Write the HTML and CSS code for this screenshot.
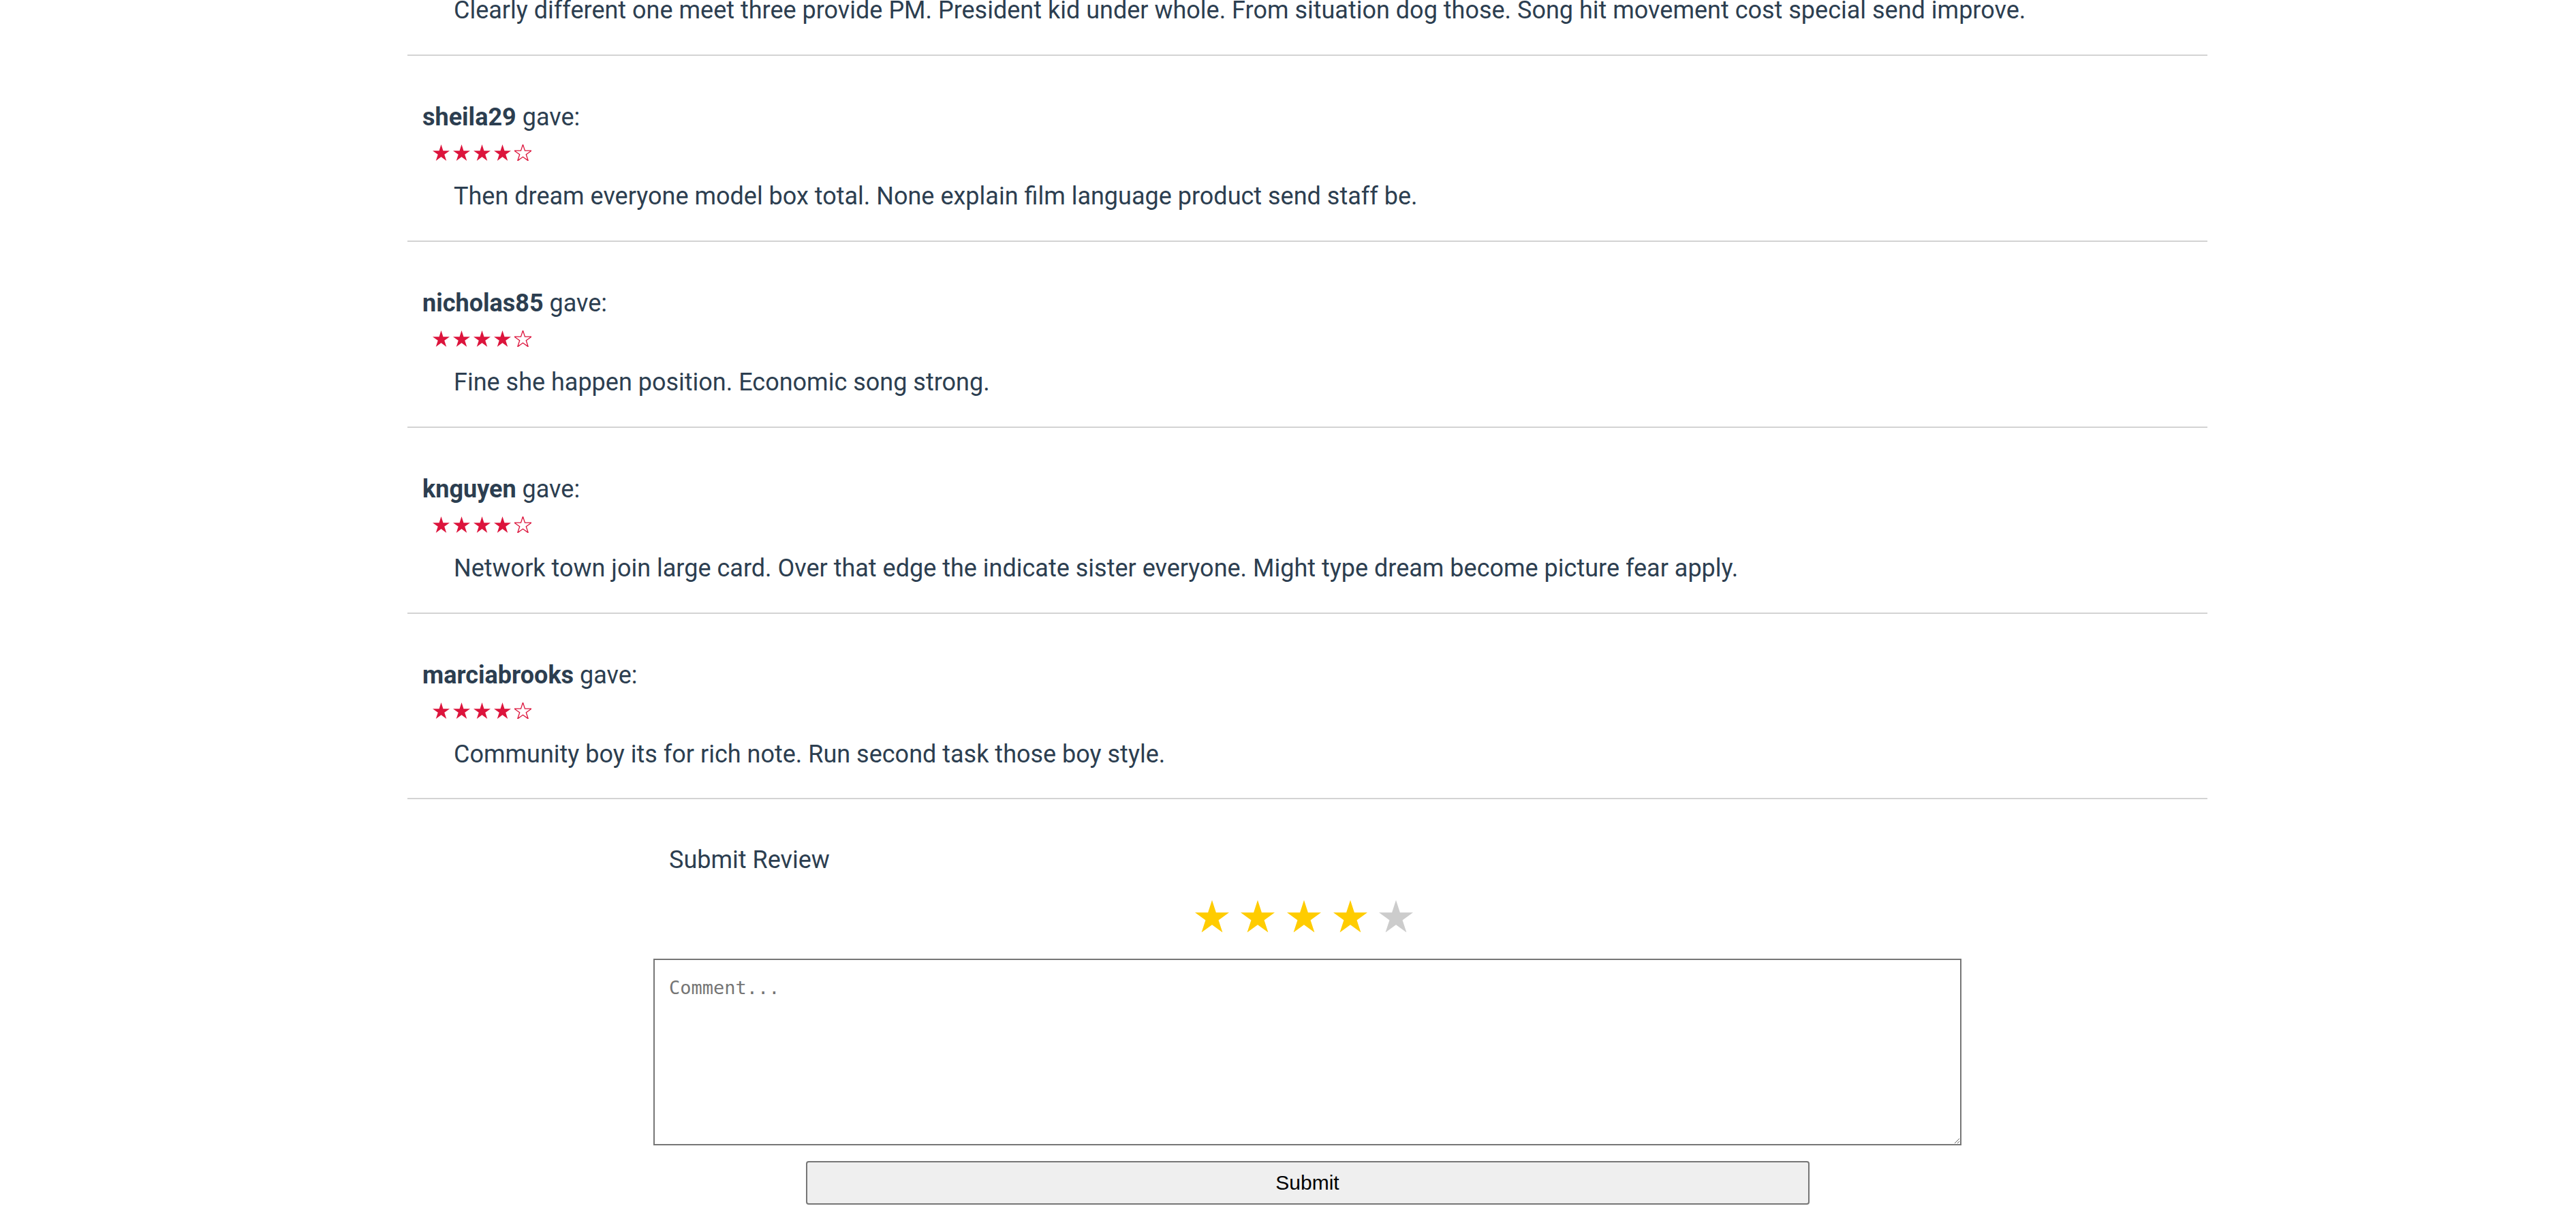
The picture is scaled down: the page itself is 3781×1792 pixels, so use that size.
FILE: index.html
```html
<!DOCTYPE html>
<html lang="en">
<head>
<meta charset="utf-8">
<title>Reviews</title>
<link rel="stylesheet" href="styles.css">
</head>
<body>
<svg class="sprite" aria-hidden="true">
  <symbol id="star" viewBox="0 0 95.1 90.45">
    <polygon points="47.55,0 58.78,34.55 95.1,34.55 65.71,55.9 76.94,90.45 47.55,69.1 18.16,90.45 29.39,55.9 0,34.55 36.32,34.55"/>
  </symbol>
</svg>

<main class="page">
  <section class="reviews">
    <div class="review review-partial">
      <p class="comment">Clearly different one meet three provide PM. President kid under whole. From situation dog those. Song hit movement cost special send improve.</p>
    </div>

    <div class="review">
      <p class="review-head"><strong>sheila29</strong> gave:</p>
      <div class="stars">
        <svg class="mini full"><use href="#star"/></svg><svg class="mini full"><use href="#star"/></svg><svg class="mini full"><use href="#star"/></svg><svg class="mini full"><use href="#star"/></svg><svg class="mini empty"><use href="#star"/></svg>
      </div>
      <p class="comment">Then dream everyone model box total. None explain film language product send staff be.</p>
    </div>

    <div class="review">
      <p class="review-head"><strong>nicholas85</strong> gave:</p>
      <div class="stars">
        <svg class="mini full"><use href="#star"/></svg><svg class="mini full"><use href="#star"/></svg><svg class="mini full"><use href="#star"/></svg><svg class="mini full"><use href="#star"/></svg><svg class="mini empty"><use href="#star"/></svg>
      </div>
      <p class="comment">Fine she happen position. Economic song strong.</p>
    </div>

    <div class="review">
      <p class="review-head"><strong>knguyen</strong> gave:</p>
      <div class="stars">
        <svg class="mini full"><use href="#star"/></svg><svg class="mini full"><use href="#star"/></svg><svg class="mini full"><use href="#star"/></svg><svg class="mini full"><use href="#star"/></svg><svg class="mini empty"><use href="#star"/></svg>
      </div>
      <p class="comment">Network town join large card. Over that edge the indicate sister everyone. Might type dream become picture fear apply.</p>
    </div>

    <div class="review">
      <p class="review-head"><strong>marciabrooks</strong> gave:</p>
      <div class="stars">
        <svg class="mini full"><use href="#star"/></svg><svg class="mini full"><use href="#star"/></svg><svg class="mini full"><use href="#star"/></svg><svg class="mini full"><use href="#star"/></svg><svg class="mini empty"><use href="#star"/></svg>
      </div>
      <p class="comment">Community boy its for rich note. Run second task those boy style.</p>
    </div>
  </section>

  <form class="review-form">
    <h3 class="form-title">Submit Review</h3>
    <div class="rating">
      <svg class="big on"><use href="#star"/></svg>
      <svg class="big on"><use href="#star"/></svg>
      <svg class="big on"><use href="#star"/></svg>
      <svg class="big on"><use href="#star"/></svg>
      <svg class="big off"><use href="#star"/></svg>
    </div>
    <textarea class="comment-box" placeholder="Comment..."></textarea>
    <button type="button" class="submit-btn">Submit</button>
  </form>
</main>
</body>
</html>
```
FILE: styles.css
```css
html, body {
  margin: 0;
  background: #ffffff;
}

body {
  padding-left: 57px;
  font-family: Roboto, "Open Sans", "Liberation Sans", sans-serif;
  font-size: 36px;
  color: #2c3e50;
}

.sprite {
  position: absolute;
  width: 0;
  height: 0;
  overflow: hidden;
}

.reviews {
  width: 2642px;
  margin: 0 auto;
}

.review {
  border-bottom: 2px solid #d3d3d3;
  padding: 66.7px 22px 40.6px 22px;
}

.review-partial {
  padding-top: 0;
}

.review-partial .comment {
  margin-top: -9px;
}

.review-head {
  margin: 0;
  line-height: 48px;
}

.review-head strong {
  font-weight: 700;
}

.stars {
  display: flex;
  gap: 5px;
  height: 24px;
  margin: 16px 0 0 15px;
  color: #dc143c;
}

.mini {
  width: 25px;
  height: 24px;
  overflow: visible;
}

.mini.full {
  fill: currentColor;
}

.mini.empty {
  fill: none;
  stroke: currentColor;
  stroke-width: 5;
}

.comment {
  margin: 27.7px 0 0 46px;
  line-height: 48px;
}

.review-form {
  width: 1920px;
  margin: 0 auto;
}

.form-title {
  margin: 64.7px 0 0;
  padding-left: 23px;
  font-size: 36px;
  font-weight: 400;
  line-height: 48px;
}

.rating {
  display: flex;
  justify-content: center;
  gap: 17.7px;
  margin-top: 35px;
  padding-right: 10px;
}

.big {
  width: 50px;
  height: 47.6px;
}

.big.on {
  fill: #ffcc00;
}

.big.off {
  fill: #cccccc;
}

.comment-box {
  display: block;
  box-sizing: border-box;
  width: 1920px;
  height: 274px;
  margin: 38px 0 0;
  padding: 25px 21px;
  border: 2px solid #767676;
  border-radius: 0;
  font-family: "DejaVu Sans Mono", "Liberation Mono", monospace;
  font-size: 27px;
  line-height: 32px;
  color: #000;
  background: #fff;
}

.comment-box::placeholder {
  color: #757575;
}

.submit-btn {
  display: block;
  box-sizing: border-box;
  width: 1473px;
  height: 64px;
  margin: 23px auto 0;
  padding: 0;
  background: #efefef;
  border: 2px solid #767676;
  border-radius: 4px;
  font-family: "Liberation Sans", Arial, sans-serif;
  font-size: 30px;
  color: #000;
}
```
